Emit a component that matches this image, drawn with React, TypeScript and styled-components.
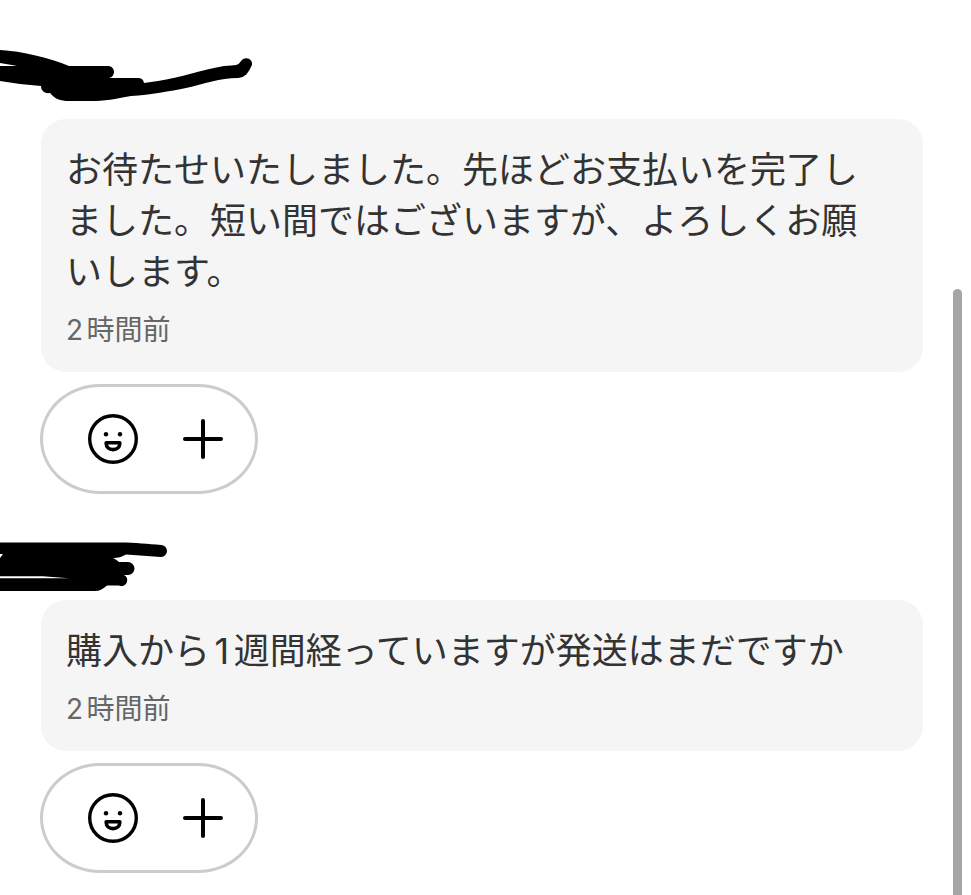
import React from 'react';
import styled, { createGlobalStyle } from 'styled-components';

const GlobalStyle = createGlobalStyle`
  *, *::before, *::after { box-sizing: border-box; }
  body {
    margin: 0;
    background: #fff;
    font-family: Inter, "Noto Sans CJK JP", sans-serif;
    text-autospace: normal;
  }
`;

const Page = styled.main`
  position: relative;
  min-height: 100vh;
  padding: 0 48px 22px 0;
`;

const ScrollThumb = styled.div`
  position: absolute;
  top: 289px;
  right: 9px;
  bottom: 0;
  width: 9px;
  border-radius: 5px 5px 0 0;
  background: #a6a6a6;
`;

const Author = styled.header<{ $height: number }>`
  display: flex;
  align-items: flex-end;
  height: ${(p) => p.$height}px;
`;

const Scribble = styled.svg`
  display: block;
`;

const Bubble = styled.article`
  display: flex;
  flex-direction: column;
  gap: 12px;
  margin-left: 41px;
  padding: 26px 25px 22px;
  border-radius: 25px;
  background: #f5f5f5;
`;

const Message = styled.p`
  margin: 0;
  color: #333;
  font-size: 36px;
  line-height: 51px;
  padding-right: 12px;
`;

const Time = styled.time`
  color: #666;
  font-size: 28px;
  line-height: 40px;
`;

const Actions = styled.div`
  display: flex;
  align-items: center;
  gap: 40px;
  width: fit-content;
  height: 110px;
  margin: 12px 0 0 40px;
  padding: 0 27px 0 45px;
  border: 3px solid #ccc;
  border-radius: 60px / 55px;
`;

const IconButton = styled.button`
  display: flex;
  width: 50px;
  height: 50px;
  padding: 0;
  border: 0;
  background: none;
  color: #000;
  cursor: pointer;
`;

const Icon = styled.svg`
  width: 50px;
  height: 50px;
  fill: none;
  stroke: currentColor;
  stroke-linecap: round;
  stroke-linejoin: round;
`;

function SmileIcon() {
  return (
    <Icon viewBox="0 0 50 50" aria-hidden="true">
      <circle cx="25" cy="25" r="23.3" strokeWidth="3.4" />
      <circle cx="18" cy="20.3" r="2.2" fill="currentColor" stroke="none" />
      <circle cx="32" cy="20.3" r="2.2" fill="currentColor" stroke="none" />
      <path d="M18.2 28.8h13.6v.8c0 3.6-2.9 6-6.8 6s-6.8-2.4-6.8-6z" strokeWidth="3.6" />
    </Icon>
  );
}

function PlusIcon() {
  return (
    <Icon viewBox="0 0 50 50" aria-hidden="true">
      <path d="M25 7v36M7 25h36" strokeWidth="4" />
    </Icon>
  );
}

function LongScribble() {
  return (
    <Scribble width="280" height="89" viewBox="0 0 280 89" aria-hidden="true">
      <path d="M0 20C22 21 50 28 69 36H107a6 6 0 0 1 2 12H138a6 6 0 0 1 6 5L158 51C180 48 204 39 224 36C236 35 238 36 241 31A6 6 0 0 1 252 35C248 43 246 47 238 48C220 48 204 54 186 58C170 61 151 65 131 66C115 69 105 71 90 71H69C60 71 55 69 50 63C44 64 41 60 41 56C27 55 13 53 0 51V36L17 36C12 35 6 34 0 33Z" />
    </Scribble>
  );
}

function ShortScribble() {
  return (
    <Scribble width="280" height="70" viewBox="0 0 280 70" aria-hidden="true">
      <path
        fillRule="evenodd"
        d="M0 12.5H120C136 12.5 148 14 161 15A6 6 0 0 1 161 27L126 24.5C122 27 118 28 113 28C115 29 117 30 119 32H128a6.4 6.4 0 0 1 0 13H124A5.5 5.5 0 0 1 119 55.5H107C103 59 100 61 95 61H0V48.3H69C60 47.5 51 47.3 43 46.3H0V28L3 24H0Z"
      />
    </Scribble>
  );
}

function ReactionBar() {
  return (
    <Actions>
      <IconButton type="button" aria-label="リアクション">
        <SmileIcon />
      </IconButton>
      <IconButton type="button" aria-label="追加">
        <PlusIcon />
      </IconButton>
    </Actions>
  );
}

interface CommentProps {
  text: string;
  time: string;
  height: number;
  author: React.ReactNode;
}

function Comment({ text, time, height, author }: CommentProps) {
  return (
    <section>
      <Author $height={height}>{author}</Author>
      <Bubble>
        <Message>{text}</Message>
        <Time>{time}</Time>
      </Bubble>
      <ReactionBar />
    </section>
  );
}

export default function App() {
  return (
    <>
      <GlobalStyle />
      <Page>
        <Comment
          author={<LongScribble />}
          height={119}
          text="お待たせいたしました。先ほどお支払いを完了しました。短い間ではございますが、よろしくお願いします。"
          time="2時間前"
        />
        <Comment
          author={<ShortScribble />}
          height={106}
          text="購入から1週間経っていますが発送はまだですか"
          time="2時間前"
        />
        <ScrollThumb />
      </Page>
    </>
  );
}
